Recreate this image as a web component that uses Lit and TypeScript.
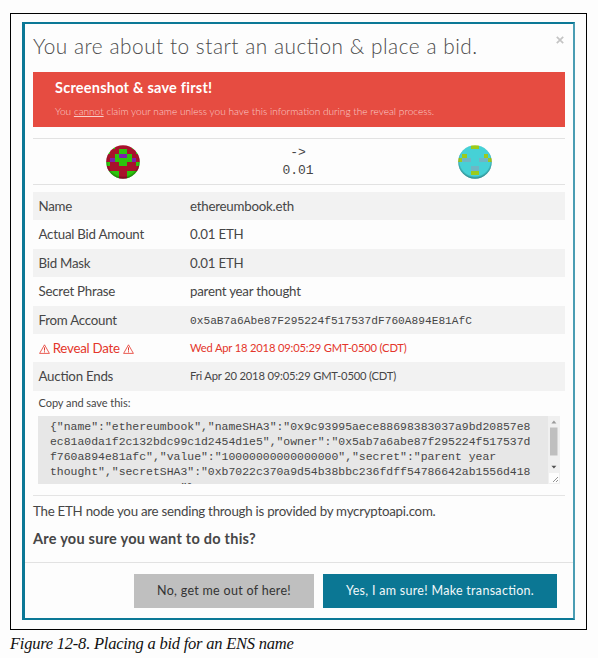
import { LitElement, html, svg, css } from "lit";
import { customElement } from "lit/decorators.js";

const LEFT = [
  "ggrrrrgg",
  "grrggrrg",
  "rrgppgrr",
  "rpggggpr",
  "grrggrrg",
  "rrrrrrrr",
  "gggrrggg",
  "gggrrggg",
];
const RIGHT = [
  "cccyyccc",
  "cccccccc",
  "cyccccyc",
  "ybbccbby",
  "cccccccc",
  "cccbbccc",
  "cccyyccc",
  "cccccccc",
];
const COLORS: Record<string, string> = {
  g: "#2cc40c", r: "#a8122c", p: "#7c1fae",
  c: "#46d1d6", y: "#9ccb1c", b: "#6fb6c4",
};

const ROWS = [
  { label: "Name", value: "ethereumbook.eth", cls: "text" },
  { label: "Actual Bid Amount", value: "0.01 ETH", cls: "text" },
  { label: "Bid Mask", value: "0.01 ETH", cls: "text" },
  { label: "Secret Phrase", value: "parent year thought", cls: "text" },
  { label: "From Account", value: "0x5aB7a6Abe87F295224f517537dF760A894E81AfC", cls: "mono" },
  { label: "Reveal Date", value: "Wed Apr 18 2018 09:05:29 GMT-0500 (CDT)", cls: "small", danger: true },
  { label: "Auction Ends", value: "Fri Apr 20 2018 09:05:29 GMT-0500 (CDT)", cls: "small" },
];

const NOTE = [
  '{"name":"ethereumbook","nameSHA3":"0x9c93995aece88698383037a9bd20857e8',
  'ec81a0da1f2c132bdc99c1d2454d1e5","owner":"0x5ab7a6abe87f295224f517537d',
  'f760a894e81afc","value":"10000000000000000","secret":"parent year',
  'thought","secretSHA3":"0xb7022c370a9d54b38bbc236fdff54786642ab1556d418',
  '                   "}',
];

@customElement("app-root")
export class AppRoot extends LitElement {
  static styles = css`
    :host { display: block; height: 658px; background: #fdfdfd; color: #464646;
      font-family: Lato, sans-serif; font-size: 14px; overflow: hidden; }
    * { box-sizing: border-box; }
    .figure { margin-left: 10px; padding-top: 13px; width: 577px; }
    .frame { border: 1px solid #000; height: 617px; padding: 8px 11px 0; }
    .modal { height: 598px; width: 553px; border: solid #0b7896; border-width: 2px 2px 2px 3px;
      border-right-color: #4b9db3; display: flex; flex-direction: column; }
    .body { padding: 0 8px; height: 538px; }
    .head { height: 48px; display: flex; justify-content: space-between; }
    .title { font-weight: 300; font-size: 20.8px; line-height: 43px; letter-spacing: .53px; color: #4c4c4c;
      white-space: nowrap; margin: 0; font-feature-settings: "liga" 1; }
    .close { width: 8px; height: 8px; margin: 12px 1px 0 0; }
    .alert { background: #e64c41; height: 55px; padding: 7px 22px 0; color: #fff; white-space: nowrap; }
    .alert-title { font-weight: 700; font-size: 14.5px; line-height: 18px; letter-spacing: .23px; }
    .alert-text { font-weight: 300; font-size: 10.1px; line-height: 14px; margin-top: 7px; color: #f9d0cc;
      font-feature-settings: "liga" 1; }
    .parties { margin-top: 11px; height: 47px; border: solid #e2e2e2; border-width: 1px 0;
      display: grid; grid-template-columns: 179px 172px 1fr; justify-items: center; align-items: center; }
    .parties svg { width: 34px; height: 34px; }
    .amount { font: 13px/18px "Liberation Mono", monospace; text-align: center; }
    .table { margin-top: 7px; }
    .row { display: grid; grid-template-columns: 151.5px 1fr; height: 28.4px; line-height: 28px;
      padding-left: 5.5px; white-space: nowrap; }
    .row:nth-child(odd) { background: #f2f2f2; }
    .label, .text { font-size: 13.3px; letter-spacing: -.24px; font-feature-settings: "liga" 1; }
    .mono { font-family: "Liberation Mono", monospace; font-size: 11.2px; line-height: 30px; }
    .small { font-size: 11.2px; line-height: 28.4px; letter-spacing: -.18px; }
    .danger { color: #e4362b; }
    .warn { width: 11px; height: 10px; vertical-align: -1px; }
    .copy { padding-left: 5.5px; font-size: 11px; line-height: 16px; margin-top: 4px; letter-spacing: -.05px; }
    .area { margin: 5px 5px 0; height: 68px; width: 522px; display: flex; background: #e7e7e7; overflow: hidden; }
    .note { margin: 0; flex: 1; padding: 3px 0 0 12px; font: 11.45px/15.2px "Liberation Mono", monospace; }
    .scroll { width: 12px; display: block; }
    .node { border-top: 1px solid #e4e4e4; margin-top: 11px; padding-top: 5px; line-height: 20px;
      font-size: 13.3px; letter-spacing: -.25px; white-space: nowrap; }
    .sure { font-weight: 700; line-height: 20px; margin-top: 8px; font-size: 14.5px; letter-spacing: .25px; }
    .foot { border-top: 1px solid #e2e2e2; height: 56px; padding: 11px 16px 0 0; display: flex;
      justify-content: flex-end; gap: 9px; }
    .btn { border: 0; padding: 0; height: 34px; font: 12.5px/34px Lato, sans-serif; letter-spacing: .3px;
      text-align: center; white-space: nowrap; font-feature-settings: "liga" 1; }
    .no { width: 180px; background: #bfbfbf; color: #333; }
    .yes { width: 234px; background: #0b7794; color: #f2f8fa; }
    .caption { font: italic 16.5px/20px "Liberation Serif", serif; color: #111; margin-top: 4px;
      letter-spacing: -.23px; white-space: nowrap; }
  `;

  private identicon(grid: string[], id: string) {
    return html`<svg viewBox="0 0 32 32">
      <defs>
        <clipPath id="clip-${id}"><circle cx="16" cy="16" r="15.8"></circle></clipPath>
        <radialGradient id="shade-${id}" cx=".5" cy=".46" r=".54">
          <stop offset=".84" stop-color="#000" stop-opacity="0"></stop>
          <stop offset="1" stop-color="#000" stop-opacity=".4"></stop>
        </radialGradient>
      </defs>
      <g clip-path="url(#clip-${id})" shape-rendering="crispEdges">
        ${grid.map((line, y) => [...line].map((c, x) =>
          svg`<rect x=${x * 4} y=${y * 4} width="4" height="4" fill=${COLORS[c]}></rect>`))}
      </g>
      <circle cx="16" cy="16" r="15.8" fill="url(#shade-${id})"></circle>
    </svg>`;
  }

  private warning() {
    return html`<svg class="warn" viewBox="0 0 11 10" fill="none" stroke="currentColor" stroke-width=".8">
      <path d="M5.5 .8L10.4 9.4H.6Z"></path><path d="M5.5 3.4v3.2M5.5 7.3v1.1" stroke-width="1"></path></svg>`;
  }

  render() {
    return html`
      <div class="figure">
        <div class="frame">
          <div class="modal">
            <div class="body">
              <div class="head">
                <h2 class="title">You are about to start an auction &amp; place a bid.</h2>
                <svg class="close" viewBox="0 0 8 8" stroke="#c4c4c4" stroke-width="1.7"><path d="M.8 .8L7.2 7.2M7.2 .8L.8 7.2"></path></svg>
              </div>
              <div class="alert">
                <div class="alert-title">Screenshot &amp; save first!</div>
                <div class="alert-text">You <u>cannot</u> claim your name unless you have this information during the reveal process.</div>
              </div>
              <div class="parties">
                ${this.identicon(LEFT, "from")}
                <div class="amount">-&gt;<br />0.01</div>
                ${this.identicon(RIGHT, "to")}
              </div>
              <div class="table">
                ${ROWS.map((r) => html`<div class="row ${r.danger ? "danger" : ""}">
                  <span class="label">${r.danger ? html`${this.warning()} ${r.label} ${this.warning()}` : r.label}</span>
                  <span class=${r.cls}>${r.value}</span>
                </div>`)}
              </div>
              <div class="copy">Copy and save this:</div>
              <div class="area">
                <pre class="note">${NOTE.join("\n")}</pre>
                <svg class="scroll" viewBox="0 0 12 68">
                  <rect width="12" height="68" fill="#f0f0f0"></rect>
                  <path d="M3.4 7.5L5.9 4.5L8.4 7.5Z" fill="#999"></path>
                  <rect x="2" y="11.5" width="7.5" height="28" fill="#bfbfbf"></rect>
                  <path d="M3.4 49.8L5.9 52.6L8.4 49.8Z" fill="#505050"></path>
                  <rect x="1" y="57" width="10" height="10" fill="#fdfdfd"></rect>
                  <path d="M5 66L10 61M8 66L10 64" stroke="#777" stroke-width=".8"></path>
                </svg>
              </div>
              <div class="node">The ETH node you are sending through is provided by mycryptoapi.com.</div>
              <div class="sure">Are you sure you want to do this?</div>
            </div>
            <div class="foot">
              <button class="btn no">No, get me out of here!</button>
              <button class="btn yes">Yes, I am sure! Make transaction.</button>
            </div>
          </div>
        </div>
        <div class="caption">Figure 12-8. Placing a bid for an ENS name</div>
      </div>`;
  }
}
